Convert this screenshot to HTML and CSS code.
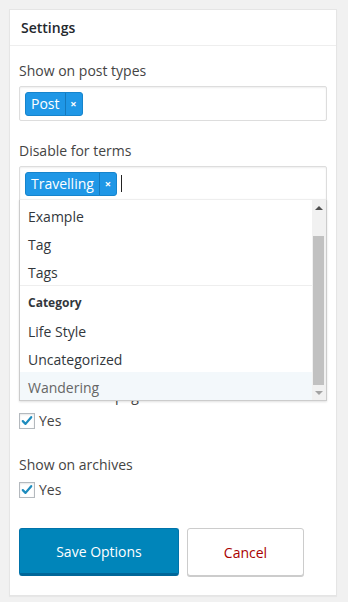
FILE: index.html
```html
<!DOCTYPE html>
<html lang="en">
<head>
    <meta charset="UTF-8">
    <meta name="viewport" content="width=device-width, initial-scale=1.0">
    <title>Settings</title>
    <link rel="stylesheet" href="styles.css">
</head>
<body>
    <div class="card">
        <!-- Header -->
        <div class="card-header">Settings</div>

        <div class="card-body">
            <!-- Post types -->
            <div class="field">
                <label class="field-label">Show on post types</label>
                <div class="tag-input">
                    <span class="tag"><span class="tag-text">Post</span><span class="tag-remove">×</span></span>
                </div>
            </div>

            <!-- Terms, with open dropdown -->
            <div class="field">
                <label class="field-label">Disable for terms</label>
                <div class="tag-input is-open">
                    <span class="tag"><span class="tag-text">Travelling</span><span class="tag-remove">×</span></span>
                    <span class="caret"></span>

                    <div class="dropdown">
                        <ul class="dropdown-list">
                            <li class="option">Example</li>
                            <li class="option">Tag</li>
                            <li class="option">Tags</li>
                            <li class="group">
                                <span class="group-label">Category</span>
                                <ul>
                                    <li class="option">Life Style</li>
                                    <li class="option">Uncategorized</li>
                                    <li class="option is-highlighted">Wandering</li>
                                </ul>
                            </li>
                        </ul>
                        <div class="scrollbar">
                            <span class="scroll-btn"><span class="arrow-up"></span></span>
                            <span class="scroll-track"><span class="scroll-thumb"></span></span>
                            <span class="scroll-btn"><span class="arrow-down"></span></span>
                        </div>
                    </div>
                </div>
            </div>

            <!-- Covered by the open dropdown -->
            <div class="field field-covered">
                <label class="field-label">Layout</label>
                <div class="select-box"></div>
            </div>

            <div class="field field-check">
                <label class="field-label">Show on front page</label>
                <label class="check-row">
                    <span class="checkbox is-checked"><svg viewBox="0 0 16 16" width="16" height="16"><path d="M3.2 8.2 L6.3 11.3 L12.8 3.6" fill="none" stroke="#1e8cbe" stroke-width="2.6" stroke-linecap="round" stroke-linejoin="round"/></svg></span>
                    Yes
                </label>
            </div>

            <div class="field field-check">
                <label class="field-label">Show on archives</label>
                <label class="check-row">
                    <span class="checkbox is-checked"><svg viewBox="0 0 16 16" width="16" height="16"><path d="M3.2 8.2 L6.3 11.3 L12.8 3.6" fill="none" stroke="#1e8cbe" stroke-width="2.6" stroke-linecap="round" stroke-linejoin="round"/></svg></span>
                    Yes
                </label>
            </div>

            <!-- Actions -->
            <div class="actions">
                <button class="btn btn-primary">Save Options</button>
                <button class="btn btn-cancel">Cancel</button>
            </div>
        </div>
    </div>
</body>
</html>
```

FILE: styles.css
```css
/* Base */
* {
    margin: 0;
    padding: 0;
    box-sizing: border-box;
}

body {
    font-family: "Open Sans", "Liberation Sans", sans-serif;
    font-size: 14px;
    line-height: 20px;
    color: #444;
    background-color: #f1f1f1;
}

ul {
    list-style: none;
}

/* Card */
.card {
    margin: 9px;
    width: 328px;
    background-color: #fff;
    border: 1px solid #e5e5e5;
    box-shadow: 0 1px 1px rgba(0,0,0,0.04);
}

.card-header {
    height: 36px;
    line-height: 36px;
    padding: 0 11px;
    font-weight: 600;
    color: #23282d;
    border-bottom: 1px solid #eee;
}

.card-body {
    padding: 15px 9px 19px;
}

/* Fields */
.field {
    margin-bottom: 20px;
}

.field-covered {
    margin-bottom: 105px; /* room the dropdown hangs over */
}

.field-check {
    margin-bottom: 24px;
}

.field-label {
    display: block;
    margin-bottom: 5px;
    color: #444;
}

.select-box {
    height: 35px;
    border: 1px solid #ddd;
    box-shadow: inset 0 1px 2px rgba(0,0,0,0.07);
}

/* Tag input */
.tag-input {
    position: relative;
    display: flex;
    align-items: center;
    height: 35px;
    padding: 0 5px;
    border: 1px solid #ddd;
    border-radius: 2px;
    box-shadow: inset 0 1px 2px rgba(0,0,0,0.07);
    background-color: #fff;
}

.tag {
    display: inline-flex;
    height: 24px;
    line-height: 22px;
    color: #fff;
    background-color: #1f97e6;
    border: 1px solid #1684cc;
    border-radius: 3px;
}

.tag-text {
    padding: 0 5px;
}

.tag-remove {
    width: 17px;
    text-align: center;
    font-size: 11px;
    font-weight: 700;
    border-left: 1px solid #1479bd;
}

.caret {
    width: 1px;
    height: 17px;
    margin-left: 4px;
    background-color: #222;
}

/* Dropdown */
.dropdown {
    position: absolute;
    z-index: 10;
    top: 100%;
    left: -1px;
    right: -1px;
    margin-top: -1px;
    height: 202px;
    display: flex;
    background-color: #fff;
    border: 1px solid #ccc;
    border-top-color: #eee;
    box-shadow: 0 1px 2px rgba(0,0,0,0.12);
}

.dropdown-list {
    flex: 1;
    padding-top: 1px;
    overflow: hidden;
}

.option {
    height: 28px;
    line-height: 28px;
    padding: 2px 8px 0;
    color: #32373c;
    overflow: hidden;
}

.option.is-highlighted {
    background-color: #f3f8fb;
    color: #666;
}

.group {
    border-top: 1px solid #eee;
}

.group-label {
    display: block;
    height: 30px;
    line-height: 30px;
    padding: 2px 8px 0;
    font-size: 12px;
    font-weight: 700;
    color: #32373c;
    overflow: hidden;
}

/* Fake scrollbar */
.scrollbar {
    width: 14px;
    display: flex;
    flex-direction: column;
    background-color: #f1f1f1;
}

.scroll-btn {
    height: 15px;
    display: flex;
    align-items: center;
    justify-content: center;
}

.arrow-up {
    width: 0;
    height: 0;
    border-left: 4px solid transparent;
    border-right: 4px solid transparent;
    border-bottom: 4px solid #505050;
}

.arrow-down {
    width: 0;
    height: 0;
    border-left: 4px solid transparent;
    border-right: 4px solid transparent;
    border-top: 4px solid #a3a3a3;
}

.scroll-track {
    flex: 1;
    padding: 21px 2px 0 1px;
}

.scroll-thumb {
    display: block;
    height: 149px;
    background-color: #c1c1c1;
}

/* Checkbox */
.check-row {
    display: flex;
    align-items: center;
    gap: 4px;
    height: 20px;
    color: #444;
}

.checkbox {
    width: 16px;
    height: 16px;
    border: 1px solid #b4b9be;
    background-color: #fff;
    box-shadow: inset 0 1px 2px rgba(0,0,0,0.1);
    display: flex;
    align-items: center;
    justify-content: center;
}

.checkbox svg {
    margin-top: -1px;
}

/* Buttons */
.actions {
    display: flex;
    gap: 8px;
    margin-top: 28px;
}

.btn {
    height: 48px;
    font-family: inherit;
    font-size: 14px;
    border-radius: 3px;
    cursor: pointer;
}

.btn-primary {
    width: 160px;
    color: #fff;
    background-color: #0085ba;
    border: 1px solid #0073aa;
    border-bottom: 3px solid #006799;
}

.btn-cancel {
    width: 117px;
    color: #a00;
    background-color: #fff;
    border: 1px solid #ccc;
    box-shadow: 0 1px 0 #ccc;
}
```
